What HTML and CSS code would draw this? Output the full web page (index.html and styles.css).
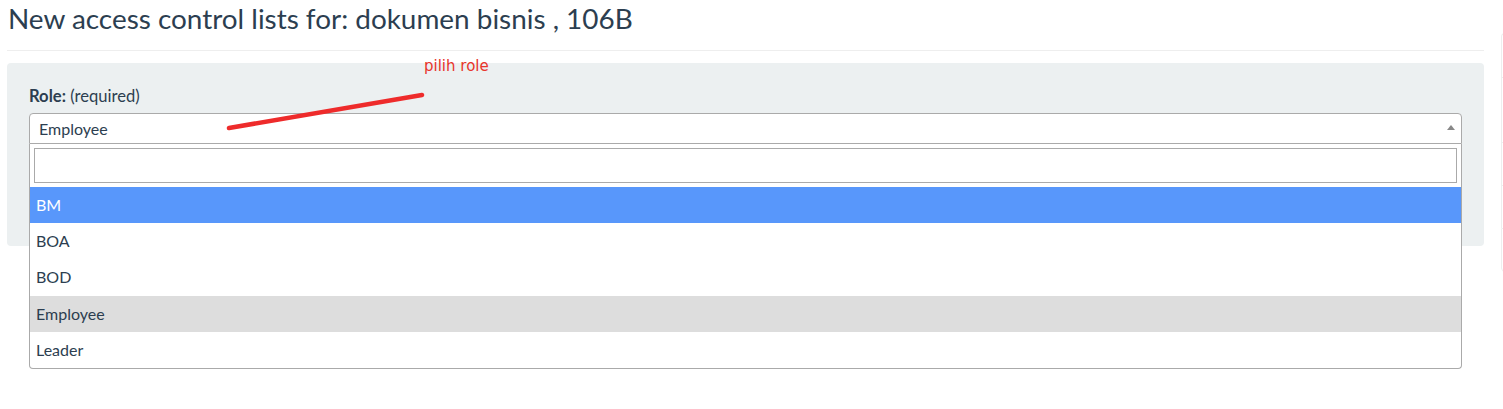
FILE: index.html
```html
<!DOCTYPE html>
<html lang="id">
<head>
<meta charset="utf-8">
<title>New access control lists</title>
<link rel="stylesheet" href="styles.css">
</head>
<body>
<div class="page">
  <div class="main">
    <h1 class="title">New access control lists for: dokumen bisnis , 106B</h1>
    <hr class="rule">
    <div class="well">
      <label class="field-label"><b>Role:</b> (required)</label>
      <div class="select-wrap">
        <div class="select-box">
          <span class="select-value">Employee</span>
          <span class="select-arrow"></span>
        </div>
        <div class="dropdown">
          <div class="search-area"><input class="search-input" type="text"></div>
          <ul class="results">
            <li class="opt highlighted">BM</li>
            <li class="opt">BOA</li>
            <li class="opt">BOD</li>
            <li class="opt selected">Employee</li>
            <li class="opt">Leader</li>
          </ul>
        </div>
      </div>
    </div>
  </div>
  <div class="side">
    <div class="side-item h44"></div>
    <div class="side-item h65"></div>
    <div class="side-item h43"></div>
    <div class="side-item h43"></div>
    <div class="side-item h44 last"></div>
  </div>
</div>
<div class="annotation">
  <svg class="anno-line" width="240" height="60" viewBox="0 0 240 60">
    <line x1="8" y1="43" x2="201" y2="10" stroke="#ee2b2b" stroke-width="4.5" stroke-linecap="round"/>
  </svg>
  <span class="anno-text">pilih role</span>
</div>
</body>
</html>
```
FILE: styles.css
```css
html, body {
  margin: 0;
  padding: 0;
  background: #ffffff;
  overflow: hidden;
}
body {
  font-family: Lato, "Open Sans", sans-serif;
  font-size: 16px;
  color: #2c3e50;
  position: relative;
  height: 409px;
}
.page {
  display: flex;
  padding-left: 7px;
  gap: 17px;
}
.main {
  width: 1477px;
  flex: none;
}
.title {
  margin: 3px 0 0 1px;
  font-size: 27.9px;
  font-weight: 400;
  line-height: 30px;
  color: #2c3e50;
}
.rule {
  margin: 17px 0 12px;
  border: 0;
  border-top: 1px solid #eeeeee;
  height: 0;
}
.well {
  background: #ecf0f1;
  border-radius: 4px;
  padding: 21px 22px 102px;
}
.field-label {
  display: block;
  font-size: 16.6px;
  line-height: 24px;
  margin-bottom: 5px;
}
.field-label b {
  font-weight: 700;
}
.select-wrap {
  position: relative;
}
.select-box {
  height: 29px;
  background: #fff;
  border: 1px solid #aaaaaa;
  border-radius: 4px 4px 0 0;
  display: flex;
  align-items: center;
  padding: 0 0 0 9px;
  position: relative;
}
.select-value {
  line-height: 28px;
  flex: 1;
  padding-top: 1px;
}
.select-arrow {
  width: 0;
  height: 0;
  border-style: solid;
  border-width: 0 4px 5px 4px;
  border-color: transparent transparent #888888 transparent;
  margin-right: 6px;
  margin-top: -2px;
}
.dropdown {
  position: absolute;
  left: 0;
  right: 0;
  top: 100%;
  background: #fff;
  border: 1px solid #aaaaaa;
  border-top: 0;
  border-radius: 0 0 4px 4px;
  z-index: 5;
}
.search-area {
  padding: 4px;
}
.search-input {
  display: block;
  box-sizing: border-box;
  width: 100%;
  height: 35px;
  margin: 0;
  border: 1px solid #aaaaaa;
  background: #fff;
  font: inherit;
  outline: none;
}
.results {
  list-style: none;
  margin: 0;
  padding: 0;
}
.opt {
  height: 36.2px;
  line-height: 36px;
  padding: 0 6px;
  color: #2c3e50;
}
.opt.highlighted {
  background: #5897fb;
  color: #ffffff;
}
.opt.selected {
  background: #dddddd;
}
.side {
  width: 200px;
  flex: none;
  margin-top: 33px;
  display: flex;
  flex-direction: column;
}
.side-item {
  border: 1px solid #eeeeee;
  border-bottom: 0;
  box-sizing: border-box;
}
.side-item:first-child {
  border-top-left-radius: 4px;
}
.side-item.last {
  border-bottom: 1px solid #eeeeee;
  border-bottom-left-radius: 4px;
}
.h44 { height: 44px; }
.h65 { height: 65px; }
.h43 { height: 43px; }
.annotation {
  position: absolute;
  left: 221px;
  top: 56px;
  width: 280px;
  height: 80px;
  pointer-events: none;
  z-index: 10;
}
.anno-line {
  position: absolute;
  left: 0;
  top: 29px;
}
.anno-text {
  position: absolute;
  left: 203px;
  top: 1px;
  font-family: "DejaVu Sans", sans-serif;
  font-size: 15px;
  line-height: 18px;
  color: #e8352b;
}
```
